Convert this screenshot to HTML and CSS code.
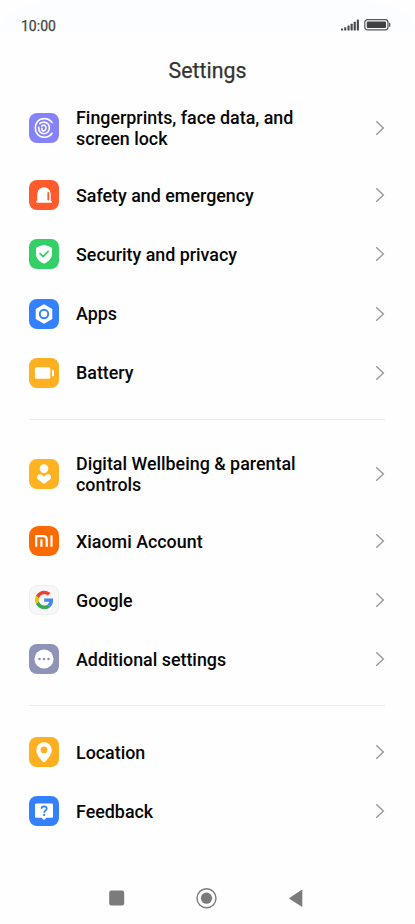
FILE: index.html
```html
<!DOCTYPE html>
<html lang="en">
<head>
<meta charset="utf-8">
<title>Settings</title>
<link rel="stylesheet" href="styles.css">
</head>
<body>
<div class="phone">
  <header class="status">
    <span class="time">10:00</span>
    <svg class="indicators" width="50" height="14" viewBox="0 0 50 14">
      <g fill="#484848"><rect x="0" y="9.6" width="2.1" height="2" rx=".5"/><rect x="3.2" y="8.3" width="2.1" height="3.3" rx=".5"/><rect x="6.5" y="6.6" width="2.1" height="5" rx=".5"/><rect x="9.6" y="4.8" width="2.1" height="6.8" rx=".5"/><rect x="12.7" y="2.8" width="2.1" height="8.8" rx=".5"/><rect x="15.8" y=".5" width="2.1" height="11.1" rx=".5"/></g>
      <rect x="23.8" y=".7" width="23.2" height="10.2" rx="2.8" fill="none" stroke="#555" stroke-width="1.2"/>
      <rect x="25.8" y="2.6" width="19.2" height="6.4" rx="1.2" fill="#404040"/>
      <path d="M48 3.8h.5q.9 0 .9.9v2.2q0 .9-.9.9H48z" fill="#666"/>
    </svg>
  </header>
  <h1 class="title">Settings</h1>
  <main class="list">
    <section class="group">
      <div class="row tall">
        <svg class="icon" viewBox="0 0 30 30"><rect width="30" height="30" rx="8" fill="#8582fa"/><g fill="none" stroke="#fff" stroke-width="1.600" stroke-linecap="round"><path d="M23 9.600C21.300 7 18.500 5.600 15.200 5.600C9.700 5.600 6.300 9.800 6.300 15S9.700 24.200 15.200 24.200C18.500 24.200 21.300 22.800 23 20.200"/><path d="M10.900 10.600C13.500 8.300 17.100 8.700 19.100 11.100C20.800 13.200 20.800 16.700 19.100 18.800C17.100 21.200 13.500 21.300 11.200 19.100C9.900 17.900 9.700 16.500 9.700 14.200"/><path d="M12.800 13.200C14.100 11.200 17 12 17 15S14.100 18.800 12.900 16.800V15.200"/></g></svg>
        <span class="label">Fingerprints, face data, and screen lock</span>
        <svg class="chevron" viewBox="0 0 10 16"><path d="M1.2 1.2L8.4 8 1.2 14.8"/></svg>
      </div>
      <div class="row">
        <svg class="icon" viewBox="0 0 30 30"><rect width="30" height="30" rx="8" fill="#ff5b2d"/><path d="M8.200 20.800V14a6.800 6.800 0 0 1 13.600 0v6.800q1.200 0 1.200 1t-1.200 1H8.200q-1.200 0-1.200-1t1.200-1z" fill="#fff"/><path d="M19.300 13v6.500" stroke="#ff5b2d" stroke-width="1.800" stroke-linecap="round"/></svg>
        <span class="label">Safety and emergency</span>
        <svg class="chevron" viewBox="0 0 10 16"><path d="M1.2 1.2L8.4 8 1.2 14.8"/></svg>
      </div>
      <div class="row">
        <svg class="icon" viewBox="0 0 30 30"><rect width="30" height="30" rx="8" fill="#35cf68"/><path d="M14 5.900q1-.5 2 0l6 2.300q1 .4 1 1.400v5.500c0 4.300-3.300 7.400-7 9.200q-1 .5-2 0c-3.700-1.800-7-4.900-7-9.200V9.600q0-1 1-1.400z" fill="#fff"/><path d="M11.100 14.700l3 3 5-5.400" fill="none" stroke="#35cf68" stroke-width="1.700" stroke-linecap="round" stroke-linejoin="round"/></svg>
        <span class="label">Security and privacy</span>
        <svg class="chevron" viewBox="0 0 10 16"><path d="M1.2 1.2L8.4 8 1.2 14.8"/></svg>
      </div>
      <div class="row">
        <svg class="icon" viewBox="0 0 30 30"><rect width="30" height="30" rx="8" fill="#3480ff"/><path d="M15 6.300l7.300 4.300v8.800L15 23.700l-7.300-4.300v-8.800z" fill="#fff" stroke="#fff" stroke-width="2" stroke-linejoin="round"/><circle cx="15" cy="15" r="4.200" fill="none" stroke="#3480ff" stroke-width="1.900"/></svg>
        <span class="label">Apps</span>
        <svg class="chevron" viewBox="0 0 10 16"><path d="M1.2 1.2L8.4 8 1.2 14.8"/></svg>
      </div>
      <div class="row">
        <svg class="icon" viewBox="0 0 30 30"><rect width="30" height="30" rx="8" fill="#ffb020"/><rect x="5.900" y="9.200" width="15.400" height="11.600" rx="1.600" fill="#fff"/><rect x="23" y="11.700" width="2" height="6.600" rx=".7" fill="#fff"/></svg>
        <span class="label">Battery</span>
        <svg class="chevron" viewBox="0 0 10 16"><path d="M1.2 1.2L8.4 8 1.2 14.8"/></svg>
      </div>
    </section>
    <hr class="divider">
    <section class="group">
      <div class="row tall">
        <svg class="icon" viewBox="0 0 30 30"><rect width="30" height="30" rx="8" fill="#ffb323"/><circle cx="15" cy="9.600" r="4.300" fill="#fff"/><path d="M8.700 16.200c1.700-1.500 3.300-.9 4.500 0L15 17.500l1.800-1.300c1.200-.9 2.800-1.500 4.500 0c1.200 1.200 1 3.100-.2 4.100L16.400 24q-1.400 1-2.800 0l-4.700-3.700c-1.200-1-1.400-2.900-.2-4.100z" fill="#fff"/></svg>
        <span class="label">Digital Wellbeing &amp; parental controls</span>
        <svg class="chevron" viewBox="0 0 10 16"><path d="M1.2 1.2L8.4 8 1.2 14.8"/></svg>
      </div>
      <div class="row">
        <svg class="icon" viewBox="0 0 30 30"><rect width="30" height="30" rx="9.500" fill="#ff6a00"/><g fill="none" stroke="#fff" stroke-width="2.200"><path d="M7.200 20.700v-10.500h7.100q3.400 0 3.400 3.300v7.200"/><path d="M12.400 13.200v7.500M22.500 9.200v11.500"/></g></svg>
        <span class="label">Xiaomi Account</span>
        <svg class="chevron" viewBox="0 0 10 16"><path d="M1.2 1.2L8.4 8 1.2 14.8"/></svg>
      </div>
      <div class="row">
        <svg class="icon" viewBox="0 0 30 30"><rect x=".5" y=".5" width="29" height="29" rx="7.500" fill="#f7f7f7" stroke="#eeeeee"/><g transform="translate(6 5.700) scale(.385)"><path fill="#ea4335" d="M24 9.500c3.540 0 6.710 1.220 9.210 3.600l6.850-6.850C35.900 2.380 30.470 0 24 0 14.620 0 6.510 5.380 2.560 13.220l7.980 6.190C12.430 13.720 17.740 9.500 24 9.500z"/><path fill="#4285f4" d="M46.980 24.550c0-1.570-.15-3.090-.38-4.550H24v9.020h12.940c-.58 2.960-2.260 5.480-4.780 7.180l7.730 6c4.510-4.180 7.090-10.360 7.090-17.650z"/><path fill="#fbbc05" d="M10.530 28.590c-.48-1.450-.76-2.990-.76-4.590s.27-3.140.76-4.590l-7.980-6.190C.92 16.460 0 20.120 0 24c0 3.880.92 7.540 2.560 10.780l7.970-6.190z"/><path fill="#34a853" d="M24 48c6.480 0 11.930-2.130 15.890-5.810l-7.730-6c-2.150 1.450-4.920 2.300-8.160 2.300-6.260 0-11.570-4.220-13.470-9.910l-7.980 6.190C6.510 42.620 14.620 48 24 48z"/></g></svg>
        <span class="label">Google</span>
        <svg class="chevron" viewBox="0 0 10 16"><path d="M1.2 1.2L8.4 8 1.2 14.8"/></svg>
      </div>
      <div class="row">
        <svg class="icon" viewBox="0 0 30 30"><rect width="30" height="30" rx="8" fill="#8e94b7"/><circle cx="15" cy="15" r="9.500" fill="#fff"/><g fill="#8e94b7"><circle cx="10.500" cy="15" r="1.300"/><circle cx="15" cy="15" r="1.300"/><circle cx="19.500" cy="15" r="1.300"/></g></svg>
        <span class="label">Additional settings</span>
        <svg class="chevron" viewBox="0 0 10 16"><path d="M1.2 1.2L8.4 8 1.2 14.8"/></svg>
      </div>
    </section>
    <hr class="divider">
    <section class="group">
      <div class="row">
        <svg class="icon" viewBox="0 0 30 30"><rect width="30" height="30" rx="8" fill="#ffb020"/><path fill-rule="evenodd" d="M15 5.200a7.700 7.700 0 0 1 7.700 7.700c0 4.600-3.600 8.500-6.300 11.500q-1.400 1.400-2.800 0c-2.700-3-6.300-6.900-6.300-11.500A7.700 7.700 0 0 1 15 5.200zM15 9.500a3.400 3.400 0 1 0 0 6.800a3.400 3.400 0 0 0 0-6.800z" fill="#fff"/></svg>
        <span class="label">Location</span>
        <svg class="chevron" viewBox="0 0 10 16"><path d="M1.2 1.2L8.4 8 1.2 14.8"/></svg>
      </div>
      <div class="row">
        <svg class="icon" viewBox="0 0 30 30"><rect width="30" height="30" rx="8" fill="#3480ff"/><path d="M7.300 7.600h15.400q1.300 0 1.300 1.300v11.600q0 1.300-1.300 1.300h-5.300l-1.700 1.700q-.7.600-1.400 0l-1.700-1.700H7.300Q6 21.800 6 20.500V8.900Q6 7.600 7.300 7.600z" fill="#fff"/><path d="M12.500 12.700c0-3.200 5.200-3.200 5.200 0c0 1.900-2.600 1.900-2.600 4" fill="none" stroke="#3480ff" stroke-width="1.700"/><circle cx="15.100" cy="18.900" r="1.100" fill="#3480ff"/></svg>
        <span class="label">Feedback</span>
        <svg class="chevron" viewBox="0 0 10 16"><path d="M1.2 1.2L8.4 8 1.2 14.8"/></svg>
      </div>
    </section>
  </main>
  <nav class="navbar">
    <svg viewBox="0 0 22 22"><rect x="3.200" y="3.500" width="15" height="15" rx="2.200" fill="#7b7b7b"/></svg>
    <svg viewBox="0 0 22 22"><circle cx="10.500" cy="11.200" r="9.500" fill="none" stroke="#7b7b7b" stroke-width="1.400"/><circle cx="10.500" cy="11.200" r="5.600" fill="#7b7b7b"/></svg>
    <svg viewBox="0 0 22 22"><path d="M17.300 3.500v15.600q0 1-.9.400L4.700 11.900q-.8-.6 0-1.200L16.400 3.100q.9-.6.900.4z" fill="#7b7b7b"/></svg>
  </nav>
</div>
</body>
</html>
```
FILE: styles.css
```css
* { box-sizing: border-box; }
body { margin: 0; background: #fefefe; font-family: Roboto, "Liberation Sans", sans-serif; }
.phone { width: 415px; height: 924px; display: flex; flex-direction: column; overflow: hidden; }
.status { height: 32px; padding: 19px 24.500px 0 21px; display: flex; justify-content: space-between; background: #fcfdfe; border-radius: 60px 60px 0 0 / 32px 32px 0 0; }
.time { font-size: 14px; line-height: 14px; font-weight: 400; color: #444; -webkit-text-stroke: .25px #444; }
.indicators { display: block; flex: none; }
.title { margin: 0; height: 58.300px; padding-top: 26px; font-size: 21.300px; line-height: 26px; font-weight: 400; text-align: center; color: #333; -webkit-text-stroke: .25px #333; }
.list { padding: 0 30px 0 29px; flex: 1; }
.row { height: 59.200px; display: flex; align-items: center; }
.row.tall { height: 75.400px; }
.icon { width: 30px; height: 30px; flex: none; }
.label { width: 240px; margin-left: 17px; font-size: 17.870px; line-height: 21px; font-weight: 500; color: #060606; }
.chevron { width: 10px; height: 16px; margin-left: auto; flex: none; fill: none; stroke: #999; stroke-width: 1.400; }
.divider { height: 1px; margin: 16.200px 0 16.400px; border: 0; background: #ececec; }
.group:first-child + .divider { margin: 16.300px 0 16.300px; }
.group:last-child { margin-top: -.1px; }
.navbar { height: 52px; padding: 0 108px 0 106px; display: flex; align-items: center; justify-content: space-between; }
.navbar svg { width: 22px; height: 22px; }
```
